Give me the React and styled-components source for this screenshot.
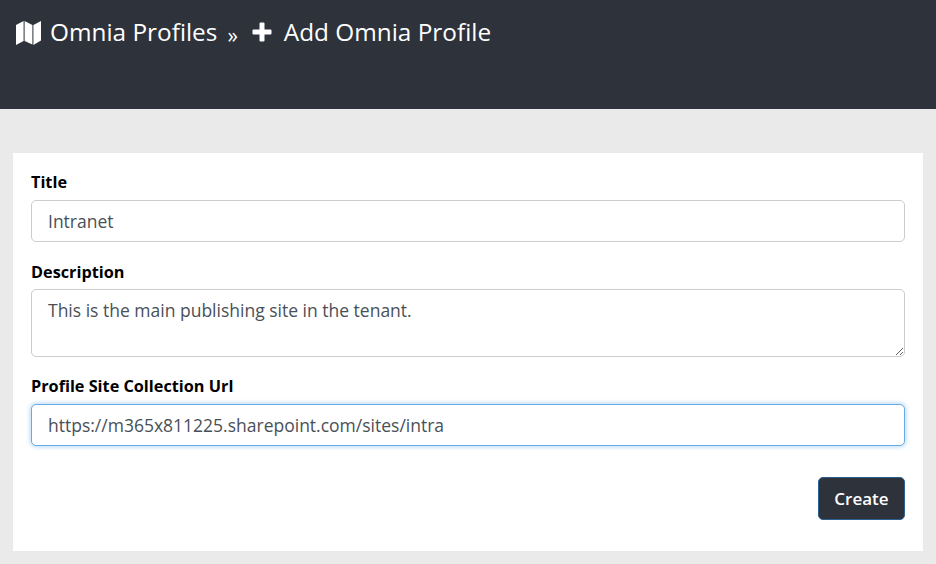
import { createGlobalStyle, styled } from 'styled-components'

const Global = createGlobalStyle`
  html, body {
    margin: 0;
    height: 100%;
    background: #eaeaea;
    font-family: "Open Sans", "Liberation Sans", sans-serif;
  }
  * { box-sizing: border-box; }
`

const Header = styled.header`
  height: 109px;
  background: #2d323b;
  color: #fff;
  display: flex;
  align-items: flex-start;
  padding: 15px 16px 0;
  font-size: 24.35px;
  line-height: 34px;
`

const Crumb = styled.span`
  display: flex;
  align-items: center;
`

const Separator = styled.span`
  font-size: 21px;
  margin: 3px 14px 0 10px;
`

const Icon = styled.svg`
  flex: none;
  fill: #fff;
  width: ${p => p.$size}px;
  height: ${p => p.$size}px;
  margin-right: ${p => p.$gap}px;
`

const Main = styled.main`
  padding: 44px 13px 13px;
`

const Card = styled.form`
  background: #fff;
  padding: 17px 18px 31px;
  display: flex;
  flex-direction: column;
`

const Field = styled.div`
  display: flex;
  flex-direction: column;
  margin-bottom: ${p => p.$after || 17}px;
`

const Label = styled.label`
  font-size: 16.25px;
  font-weight: 700;
  line-height: 24px;
  color: #000;
  margin-bottom: ${p => p.$gap || 6}px;
`

const Input = styled.input`
  height: 42px;
  padding: 0 16px;
  font: 400 17.5px "Open Sans", "Liberation Sans", sans-serif;
  color: #495057;
  background: #fff;
  border: 1px solid ${p => (p.$focused ? '#64abe8' : '#ccc')};
  border-radius: 5px;
  outline: none;
  box-shadow: ${p => (p.$focused ? '0 0 4px 1px rgba(100, 171, 232, 0.45)' : 'none')};
`

const TextArea = styled.textarea`
  height: 68px;
  padding: 8px 16px;
  font: 400 17.5px/24px "Open Sans", "Liberation Sans", sans-serif;
  color: #495057;
  border: 1px solid #ccc;
  border-radius: 5px;
  outline: none;
  display: block;
`

const Actions = styled.div`
  display: flex;
  justify-content: flex-end;
  margin-top: 14px;
`

const Button = styled.button`
  width: 87px;
  height: 43px;
  background: #2d323b;
  color: #fff;
  border: 1px solid #2a5f8f;
  border-radius: 5px;
  font: 600 17px "Open Sans", "Liberation Sans", sans-serif;
`

export default function App() {
  return (
    <>
      <Global />
      <Header>
        <Crumb>
          <Icon $size={25} $gap={9} viewBox="0 0 25 25">
            <path d="M0 5 7.6 1v20L0 25zM8.6 1l7.8 4v19.5l-7.8-3.5zM17.4 5 25 1v19.5L17.4 25z" />
          </Icon>
          Omnia Profiles
        </Crumb>
        <Separator>»</Separator>
        <Crumb>
          <Icon $size={20} $gap={12} viewBox="0 0 20 20">
            <path d="M7.5 1.5A1 1 0 0 1 8.5 0.5h3a1 1 0 0 1 1 1v6h6a1 1 0 0 1 1 1v3a1 1 0 0 1-1 1h-6v6a1 1 0 0 1-1 1h-3a1 1 0 0 1-1-1v-6h-6a1 1 0 0 1-1-1v-3a1 1 0 0 1 1-1h6z" />
          </Icon>
          Add Omnia Profile
        </Crumb>
      </Header>
      <Main>
        <Card onSubmit={e => e.preventDefault()}>
          <Field $after={18}>
            <Label>Title</Label>
            <Input defaultValue="Intranet" />
          </Field>
          <Field>
            <Label $gap={5}>Description</Label>
            <TextArea defaultValue="This is the main publishing site in the tenant." />
          </Field>
          <Field>
            <Label>Profile Site Collection Url</Label>
            <Input $focused defaultValue="https://m365x811225.sharepoint.com/sites/intra" />
          </Field>
          <Actions>
            <Button type="submit">Create</Button>
          </Actions>
        </Card>
      </Main>
    </>
  )
}
